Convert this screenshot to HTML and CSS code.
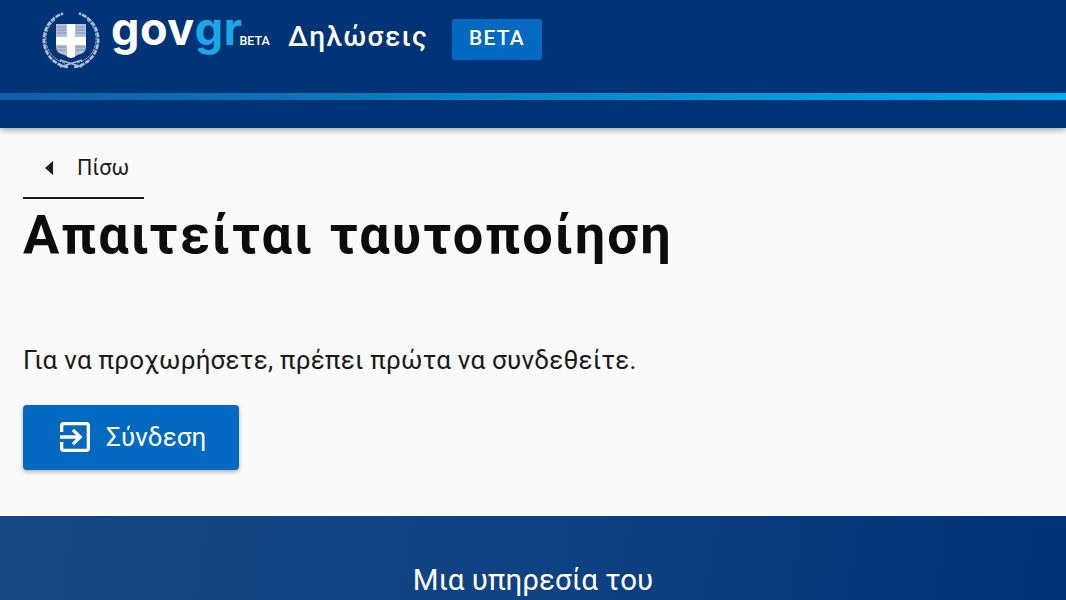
FILE: index.html
```html
<!DOCTYPE html>
<html lang="el">
<head>
    <title>Απαιτείται ταυτοποίηση</title>
    <meta charset="utf-8">
    <link rel="stylesheet" href="styles.css">
</head>
<body>
<header class="header">
    <div class="header-top">
        <svg class="emblem" viewBox="0 0 60 60" width="60" height="60">
            <!-- wreath -->
            <g fill="none" stroke="#aebdd6">
                <path d="M27 57A27.5 27.5 0 0 1 22 3.5" stroke-width="2.6" stroke-dasharray="5 1"/>
                <path d="M33 57A27.5 27.5 0 0 0 38 3.5" stroke-width="2.6" stroke-dasharray="5 1"/>
                <path d="M24 53A24.5 24.5 0 0 1 14 10" stroke-width="1" stroke-dasharray="3 1"/>
                <path d="M36 53A24.5 24.5 0 0 0 46 10" stroke-width="1" stroke-dasharray="3 1"/>
                <path d="M19 50L41 57M41 50L19 57" stroke-width="1.6"/>
            </g>
            <!-- shield -->
            <path d="M15 14H45V37Q45 43 38 44.5L30 48L22 44.5Q15 43 15 37Z" fill="#b4c0d6"/>
            <g stroke="#7f93b6" stroke-width="1">
                <path d="M16 17H25M16 20H25M16 23H25M35 17H44M35 20H44M35 23H44"/>
                <path d="M16 37H25M16 40H25M35 37H44M35 40H44"/>
            </g>
            <path d="M26 14H34V27H45V35H34V47L30 48L26 47V35H15V27H26Z" fill="#fff"/>
        </svg>
        <div class="brand">
            <span class="brand-gov">gov</span><span class="brand-gr">gr</span>
            <span class="brand-beta">BETA</span>
        </div>
        <span class="service-name">Δηλώσεις</span>
        <span class="beta-tag">BETA</span>
    </div>
    <div class="header-stripe"></div>
</header>

<main class="content">
    <a class="back-link" href="#">
        <span class="back-arrow"></span>
        <span>Πίσω</span>
    </a>
    <h1>Απαιτείται ταυτοποίηση</h1>
    <p class="lead">Για να προχωρήσετε, πρέπει πρώτα να συνδεθείτε.</p>
    <button class="login-btn">
        <svg viewBox="0 0 24 24" width="40" height="40" fill="#fff">
            <path d="M10.09 15.59 11.5 17l5-5-5-5-1.41 1.41L12.67 11H3v2h9.67l-2.58 2.59zM19 3H5c-1.11 0-2 .9-2 2v4h2V5h14v14H5v-4H3v4c0 1.1.89 2 2 2h14c1.1 0 2-.9 2-2V5c0-1.1-.9-2-2-2z"/>
        </svg>
        <span>Σύνδεση</span>
    </button>
</main>

<footer class="footer">
    <p>Μια υπηρεσία του</p>
</footer>
</body>
</html>
```

FILE: styles.css
```css
* {
    box-sizing: border-box;
}

html,
body {
    height: 600px;
    overflow: hidden;
}

body {
    margin: 0;
    font-family: Roboto, "Noto Sans", sans-serif;
    background-color: #fafafa;
    color: #1a1a1a;
}

.header {
    position: relative;
    height: 128px;
    background-color: #003476;
    box-shadow: 0 2px 6px rgba(0, 0, 0, 0.35);
}

.header-top {
    display: flex;
    align-items: center;
    height: 93px;
    padding: 0 0 14px 41px;
}

.emblem {
    flex: none;
}

.brand {
    display: flex;
    align-items: baseline;
    width: 160px;
    margin: -22px 0 0 10px;
    font-family: Inter, sans-serif;
    font-weight: 700;
    font-size: 45px;
    line-height: 1;
    letter-spacing: 0.5px;
    color: #fff;
}

.brand-gr {
    color: #1aa7e6;
}

.brand-beta {
    margin-left: -3px;
    font-family: Roboto, sans-serif;
    font-size: 12.5px;
    font-weight: 500;
    letter-spacing: 0;
    color: #fff;
}

.service-name {
    margin: 0 0 6px 17px;
    font-size: 28px;
    font-weight: 500;
    letter-spacing: 1.35px;
    color: #fff;
}

.beta-tag {
    margin-left: 24px;
    padding: 0 17px;
    height: 41px;
    line-height: 39px;
    background-color: #0469c0;
    border-radius: 3px;
    font-size: 21px;
    font-weight: 500;
    letter-spacing: 1.2px;
    color: #fff;
}

.header-stripe {
    height: 7px;
    background: linear-gradient(to right, #0d5fa8, #00aeef);
}

.content {
    height: 388px;
    padding: 0 23px;
}

.back-link {
    display: flex;
    align-items: center;
    width: 121px;
    height: 71px;
    padding: 10px 0 0 22px;
    border-bottom: 2px solid #1a1a1a;
    color: #1a1a1a;
    font-size: 21.5px;
    text-decoration: none;
}

.back-arrow {
    width: 0;
    height: 0;
    margin-right: 24px;
    border-top: 7px solid transparent;
    border-bottom: 7px solid transparent;
    border-right: 8px solid #1a1a1a;
}

h1 {
    margin: 0;
    padding-top: 3px;
    font-size: 54px;
    line-height: 66px;
    font-weight: 700;
    letter-spacing: 2.05px;
    color: #0b0c0c;
}

.lead {
    margin: 75px 0 0;
    font-size: 26px;
    line-height: 34px;
    letter-spacing: 0.24px;
}

.login-btn {
    display: flex;
    align-items: center;
    gap: 11px;
    width: 216px;
    height: 65px;
    margin-top: 28px;
    padding: 0 0 2px 32px;
    background-color: #0469c0;
    color: #fff;
    border: none;
    border-radius: 4px;
    box-shadow: 0 2px 4px rgba(0, 0, 0, 0.3);
    font-family: inherit;
    font-size: 26px;
    letter-spacing: 0.1px;
}

.footer {
    height: 84px;
    padding-top: 45px;
    background: linear-gradient(100deg, #174883, #0e4283 50%, #003476);
    text-align: center;
    color: #fff;
}

.footer p {
    margin: 0;
    font-size: 29.5px;
    line-height: 38px;
}
```
